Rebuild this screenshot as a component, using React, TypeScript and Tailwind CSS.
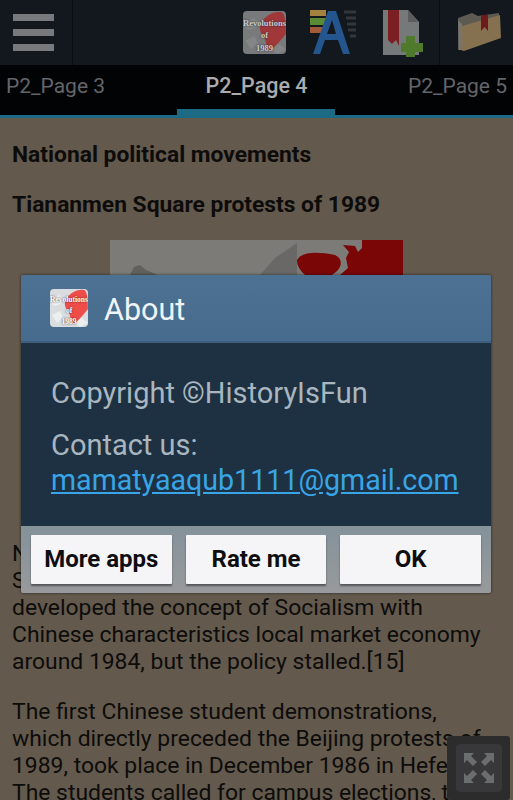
const FONT = 'font-["Roboto","Liberation_Sans",sans-serif]';

function AppIcon({ size, dim }: { size: number; dim?: boolean }) {
  const scale = size / 38;
  return (
    <div
      className="relative shrink-0 overflow-hidden rounded-[4px]"
      style={{ width: size, height: size }}
    >
      <svg viewBox="0 0 38 38" className="absolute inset-0 h-full w-full">
        <rect width="38" height="38" fill={dim ? '#787a7c' : '#d9dde0'} />
        <path
          d="M0 12 L9 6 L15 10 L11 15 L4 17Z M2 26 L10 22 L13 28 L7 34Z M24 33 L32 29 L38 34 L30 38Z"
          fill={dim ? '#838587' : '#eceef0'}
        />
        <path
          d="M17 9 C21 3 28 0 34 1 C38 2 38 16 38 20 C34 25 30 30 24 35 C20 34 21 26 18 22 C14 18 14 13 17 9Z"
          fill={dim ? '#a0383a' : '#ef4d4a'}
        />
      </svg>
      <div
        className={`absolute left-0 top-0 flex flex-col items-center whitespace-nowrap font-["Liberation_Serif",serif] font-bold ${dim ? 'text-[#c9c9c9]' : 'text-white'}`}
        style={{
          width: 38,
          transform: `scale(${scale})`,
          transformOrigin: 'top left',
          fontSize: 7.5,
          lineHeight: '11px',
          paddingTop: 5,
          textShadow: '0 0 2px #222',
        }}
      >
        <span>Revolutions</span>
        <span>of</span>
        <span>1989</span>
      </div>
    </div>
  );
}

function FontIcon() {
  return (
    <svg viewBox="0 0 48 48" className="h-[48px] w-[48px] shrink-0">
      <rect x="1" y="1" width="16" height="6" fill="#a5813f" />
      <rect x="1" y="9" width="16" height="7" fill="#5b8a35" />
      <rect x="1" y="18" width="16" height="6" fill="#a35a38" />
      <path d="M35 3h12M37 9h10M38 15h9M39 21h8M41 27h6" stroke="#33373b" strokeWidth="3" />
      <path d="M4 45 L19 2 H27 L41 45 H34 L29 31 H16 L11 45Z M18 25 H27 L23 11Z" fill="#24558c" fillRule="evenodd" />
    </svg>
  );
}

function BookmarkAddIcon() {
  return (
    <svg viewBox="0 0 44 48" className="h-[48px] w-[44px] shrink-0">
      <path d="M1 1 H26 L37 13 V46 H1Z" fill="#76797a" />
      <path d="M26 1 L37 13 H26Z" fill="#5b5d5e" />
      <path d="M6 1 H17 V37 L14 31 L10 35 L6 31Z" fill="#7c1f22" />
      <path d="M24 27 H33 V34 H41 V43 H33 V48 H24 V43 H19 V34 H24Z" fill="#4f7a2b" />
    </svg>
  );
}

function FolderIcon() {
  return (
    <svg viewBox="0 0 46 42" className="h-[42px] w-[46px] shrink-0">
      <path d="M2 6 L16 1 L22 4 L43 1 V8 L4 38 L2 38Z" fill="#5d5a52" />
      <path d="M6 14 L44 3 L45 26 L8 39 Q5 39 5 36Z" fill="#85704f" />
      <path d="M2 8 L6 12 V38 L3 38Z" fill="#77756e" />
      <path d="M25 3 H32 V19 L28.5 15 L25 19Z" fill="#6e1a1c" />
    </svg>
  );
}

function DialogButton({ label }: { label: string }) {
  return (
    <button className="h-[49px] flex-1 rounded-[1px] bg-[#f5f5f7] pb-[2px] text-[24px] font-bold text-[#0e0e10] shadow-[0_2px_2px_rgba(40,40,40,0.6)]">
      {label}
    </button>
  );
}

export default function App() {
  return (
    <div className={`relative h-[800px] w-[513px] overflow-hidden bg-[#63594d] ${FONT}`}>
      {/* action bar */}
      <div className="flex h-[65px] items-center bg-[#13181e]">
        <div className="flex h-full w-[73px] shrink-0 flex-col justify-center gap-[8px] border-r border-[#0a0d10] pl-[13px]">
          <div className="h-[7px] w-[41px] bg-[#77797c]" />
          <div className="h-[7px] w-[41px] bg-[#77797c]" />
          <div className="h-[7px] w-[41px] bg-[#77797c]" />
        </div>
        <div className="flex flex-1 items-center pl-[170px]">
          <AppIcon size={43} dim />
          <div className="ml-[23px]"><FontIcon /></div>
          <div className="ml-[25px]"><BookmarkAddIcon /></div>
        </div>
        <div className="flex h-full w-[74px] shrink-0 items-center justify-end border-l border-[#0a0d10] pr-[11px]">
          <FolderIcon />
        </div>
      </div>

      {/* tabs */}
      <div className="relative flex h-[50px] items-center justify-between bg-[#020304] px-[6px] pb-[7px] text-[21px]">
        <span className="text-[#62656a]">P2_Page 3</span>
        <span className="text-[21.5px] font-medium text-[#a9abae]">P2_Page 4</span>
        <span className="text-[#62656a]">P2_Page 5</span>
        <div className="absolute bottom-0 left-[177px] h-[6px] w-[158px] bg-[#1d6a85]" />
      </div>
      <div className="h-[3px] bg-[#1d6a85]" />

      {/* article */}
      <div className="px-[12px] pt-[23px] text-[22.9px] leading-[27px] text-[#0d0c0a]">
        <p className="text-[22.8px] font-bold">National political movements</p>
        <p className="mt-[23px] text-[22.8px] font-bold">Tiananmen Square protests of 1989</p>
        <div className="mx-auto mt-[22px] h-[288px] w-[293px] overflow-hidden bg-[#7d7b77]">
          <svg viewBox="0 0 293 288" className="h-full w-full">
            <path d="M20 35 L24 27 L30 25 L36 30 L48 35Z" fill="#62605c" />
            <path d="M150 35 L165 18 L187 3 V35Z" fill="#696866" />
            <path d="M187 20 C192 12 205 11 225 15 C232 18 233 26 226 32 L222 35 H195 C190 30 187 26 187 20Z" fill="#7a0605" />
            <path d="M230 35 L238 28 L236 18 L239 12 L233 5 L245 6 L248 12 L252 8 V0 H293 V35Z" fill="#7a0605" />
          </svg>
        </div>
        <p className="mt-[12px] whitespace-nowrap">National leaders were then divided, and Deng's</p>
        <p className="whitespace-nowrap">Soviet-style economic reforms. Zhao Ziyang</p>
        <p className="whitespace-nowrap">developed the concept of Socialism with</p>
        <p className="whitespace-nowrap">Chinese characteristics local market economy</p>
        <p className="whitespace-nowrap">around 1984, but the policy stalled.[15]</p>
        <p className="mt-[23px] whitespace-nowrap">The first Chinese student demonstrations,</p>
        <p className="whitespace-nowrap">which directly preceded the Beijing protests of</p>
        <p className="whitespace-nowrap">1989, took place in December 1986 in Hefei.</p>
        <p className="whitespace-nowrap">The students called for campus elections, the</p>
      </div>

      {/* about dialog */}
      <div className="absolute left-[21px] top-[275px] w-[470px] overflow-hidden rounded-[2px] shadow-[0_0_3px_rgba(0,0,0,0.6)]">
        <div className="flex h-[68px] items-center gap-[16px] border-b-2 border-[#3c5f7f] bg-gradient-to-b from-[#4d7192] to-[#466b8d] pl-[29px] pt-[4px]">
          <div className="-mt-[4px]"><AppIcon size={38} /></div>
          <span className="text-[30.5px] text-[#eef4f8]">About</span>
        </div>
        <div className="h-[183px] bg-[#1d3142] px-[30px] pt-[33px] text-[29px] leading-[35px] text-[#a9b6bf]">
          <p className="whitespace-nowrap">Copyright ©HistoryIsFun</p>
          <p className="mt-[17px]">Contact us:</p>
          <a className="block whitespace-nowrap text-[28.6px] text-[#39a5e6] underline">mamatyaaqub1111@gmail.com</a>
        </div>
        <div className="flex h-[67px] gap-[14px] bg-gradient-to-b from-[#84929a] to-[#989a9c] px-[10px] pt-[9px]">
          <DialogButton label="More apps" />
          <DialogButton label="Rate me" />
          <DialogButton label="OK" />
        </div>
      </div>

      {/* fullscreen toggle */}
      <div className="absolute left-[447px] top-[736px] flex h-[64px] w-[63px] items-center justify-center rounded-[3px] bg-[#2c2c2c]">
        <div className="flex h-[48px] w-[46px] items-center justify-center rounded-[4px] bg-[#38383a]">
          <svg viewBox="0 0 32 32" className="h-[32px] w-[32px]" fill="#6c6d6f">
            <path d="M1 1 H11 L8 4 L14 10 L10 14 L4 8 L1 11Z" />
            <path d="M31 1 H21 L24 4 L18 10 L22 14 L28 8 L31 11Z" />
            <path d="M1 31 H11 L8 28 L14 22 L10 18 L4 24 L1 21Z" />
            <path d="M31 31 H21 L24 28 L18 22 L22 18 L28 24 L31 21Z" />
          </svg>
        </div>
      </div>
    </div>
  );
}
